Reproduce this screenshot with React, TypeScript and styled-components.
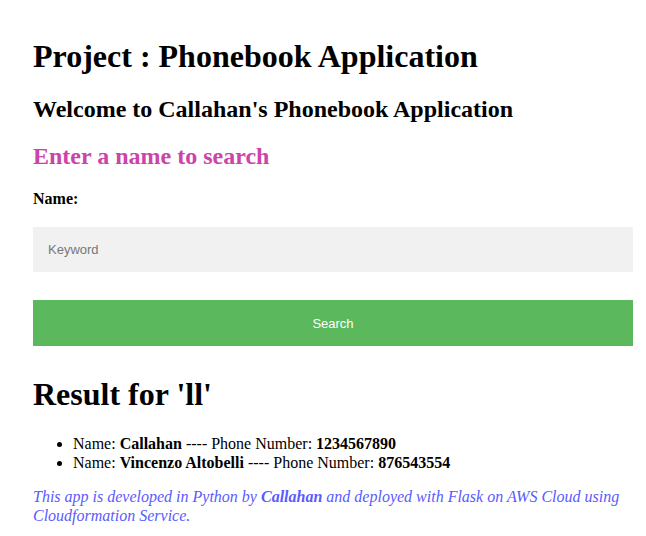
import React from "react";
import styled, { createGlobalStyle } from "styled-components";

const Global = createGlobalStyle`
  html, body { margin: 0; padding: 0; background: #ffffff; }
  body { font-family: "Liberation Serif", "Times New Roman", serif; color: #000; }
`;

const Page = styled.div`
  padding: 17px 13px 0 33px;
`;

const Title = styled.h1`
  font-size: 32px;
  font-weight: bold;
  margin: 21px 0;
`;

const Subtitle = styled.h2`
  font-size: 24px;
  font-weight: bold;
  margin: 20px 0;
`;

const Prompt = styled.h2`
  font-size: 24px;
  font-weight: bold;
  color: #cc44aa;
  margin: 18px 0 20px;
`;

const Form = styled.form`
  display: flex;
  flex-direction: column;
`;

const Label = styled.label`
  font-size: 16px;
  font-weight: bold;
  margin-bottom: 19px;
`;

const Input = styled.input`
  box-sizing: border-box;
  width: 600px;
  height: 45px;
  border: none;
  background: #f1f1f1;
  padding: 0 15px;
  font-family: "Liberation Sans", Arial, sans-serif;
  font-size: 13px;
  color: #333;
  outline: none;
  &::placeholder { color: #777777; }
`;

const Button = styled.button`
  box-sizing: border-box;
  width: 600px;
  height: 46px;
  margin-top: 28px;
  border: none;
  background: #5cb85c;
  color: #ffffff;
  font-family: "Liberation Sans", Arial, sans-serif;
  font-size: 13px;
  cursor: pointer;
`;

const ResultTitle = styled.h1`
  font-size: 32px;
  font-weight: bold;
  margin: 30px 0 21px;
`;

const List = styled.ul`
  margin: 0;
  padding-left: 40px;
  font-size: 16px;
  line-height: 19px;
`;

const Item = styled.li``;

const Footer = styled.p`
  font-size: 16px;
  line-height: 19px;
  font-style: italic;
  color: #5a5aff;
  margin: 15px 0;
`;

export default function App() {
  return (
    <>
      <Global />
      <Page>
        <Title>Project : Phonebook Application</Title>
        <Subtitle>Welcome to Callahan's Phonebook Application</Subtitle>
        <Prompt>Enter a name to search</Prompt>
        <Form onSubmit={(e) => e.preventDefault()}>
          <Label htmlFor="kw">Name:</Label>
          <Input id="kw" placeholder="Keyword" />
          <Button type="submit">Search</Button>
        </Form>
        <ResultTitle>Result for 'll'</ResultTitle>
        <List>
          <Item>
            Name: <b>Callahan</b> ---- Phone Number: <b>1234567890</b>
          </Item>
          <Item>
            Name: <b>Vincenzo Altobelli</b> ---- Phone Number: <b>876543554</b>
          </Item>
        </List>
        <Footer>
          This app is developed in Python by <b>Callahan</b> and deployed with Flask on AWS Cloud using
          Cloudformation Service.
        </Footer>
      </Page>
    </>
  );
}
